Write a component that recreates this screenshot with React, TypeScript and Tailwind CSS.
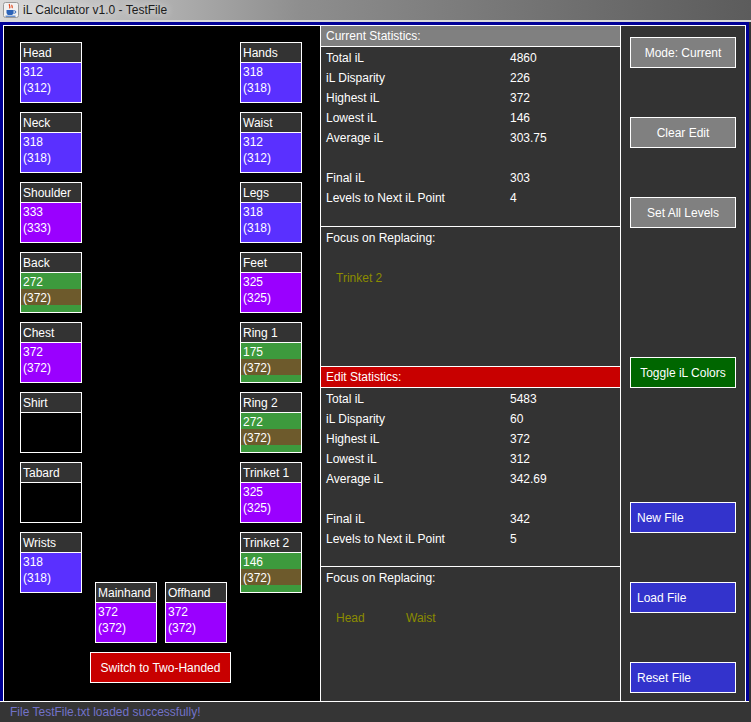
import React from 'react';

type Tone = 'blue' | 'purple' | 'low' | 'empty';

const bodyTone: Record<Tone, string> = {
  blue: 'bg-[#5a30ff]',
  purple: 'bg-[#9a00ff]',
  low: 'bg-[#3d9a3d]',
  empty: 'bg-black',
};

function Slot({ name, value, base, tone }: { name: string; value?: string; base?: string; tone: Tone }) {
  return (
    <div className="w-[62px] h-[61px] border border-white flex flex-col shrink-0">
      <div className="h-[20px] bg-[#333333] border-b border-white pl-[2px] pt-[1px] leading-[19px] text-white">{name}</div>
      <div className={`flex-1 ${bodyTone[tone]} text-white`}>
        {value && <div className="h-[16px] leading-[18px] pl-[2px]">{value}</div>}
        {base && (
          <div className={`h-[16px] leading-[18px] pl-[2px] ${tone === 'low' ? 'bg-[#6d5a2c]' : ''}`}>({base})</div>
        )}
      </div>
    </div>
  );
}

const leftSlots: { name: string; value?: string; base?: string; tone: Tone }[] = [
  { name: 'Head', value: '312', base: '312', tone: 'blue' },
  { name: 'Neck', value: '318', base: '318', tone: 'blue' },
  { name: 'Shoulder', value: '333', base: '333', tone: 'purple' },
  { name: 'Back', value: '272', base: '372', tone: 'low' },
  { name: 'Chest', value: '372', base: '372', tone: 'purple' },
  { name: 'Shirt', tone: 'empty' },
  { name: 'Tabard', tone: 'empty' },
  { name: 'Wrists', value: '318', base: '318', tone: 'blue' },
];

const rightSlots: { name: string; value?: string; base?: string; tone: Tone }[] = [
  { name: 'Hands', value: '318', base: '318', tone: 'blue' },
  { name: 'Waist', value: '312', base: '312', tone: 'blue' },
  { name: 'Legs', value: '318', base: '318', tone: 'blue' },
  { name: 'Feet', value: '325', base: '325', tone: 'purple' },
  { name: 'Ring 1', value: '175', base: '372', tone: 'low' },
  { name: 'Ring 2', value: '272', base: '372', tone: 'low' },
  { name: 'Trinket 1', value: '325', base: '325', tone: 'purple' },
  { name: 'Trinket 2', value: '146', base: '372', tone: 'low' },
];

function StatRows({ s }: { s: string[] }) {
  const labels = ['Total iL', 'iL Disparity', 'Highest iL', 'Lowest iL', 'Average iL', '', 'Final iL', 'Levels to Next iL Point'];
  return (
    <div>
      {labels.map((l, i) => (
        <div key={i} className="h-[20px] leading-[22px] flex pl-[5px] text-white">
          <span className="w-[184px]">{l}</span>
          <span>{s[i]}</span>
        </div>
      ))}
    </div>
  );
}

function Focus({ items }: { items: string[] }) {
  return (
    <div className="pl-[5px] text-white">
      <div className="h-[20px] leading-[22px]">Focus on Replacing:</div>
      <div className="mt-[20px] h-[20px] leading-[22px] flex pl-[10px] text-[#8c8c00]">
        {items.map((it) => (
          <span key={it} className="w-[70px]">{it}</span>
        ))}
      </div>
    </div>
  );
}

function SideButton({ label, tone, className = '' }: { label: string; tone: 'gray' | 'green' | 'blue'; className?: string }) {
  const styles = {
    gray: 'bg-[#808080] justify-center',
    green: 'bg-[#006600] justify-center',
    blue: 'bg-[#3333cc] justify-start pl-[6px]',
  }[tone];
  return (
    <div className={`w-[106px] h-[31px] ml-[9px] border border-white flex items-center text-white ${styles} ${className}`}>
      {label}
    </div>
  );
}

function JavaIcon() {
  return (
    <svg width="16" height="16" viewBox="0 0 16 16">
      <rect x="0.5" y="0.5" width="15" height="15" rx="2" fill="#f2f2f2" stroke="#9a9a9a" />
      <path d="M6.5 2c-1 1.4 1.4 2.4 0 4.4M9 2.8c-.8 1.2 1 2 0 3.4" stroke="#e2471c" fill="none" strokeWidth="1.2" />
      <path d="M3.5 8h7v2.5c0 1.6-1.2 2.6-2.7 2.6H6.2c-1.5 0-2.7-1-2.7-2.6z" fill="#2b63b8" />
      <path d="M10.5 8.8h1.1a1.2 1.2 0 0 1 0 2.4h-1.2" stroke="#2b63b8" fill="none" />
      <path d="M2.5 14.2h10" stroke="#2b63b8" />
    </svg>
  );
}

export default function App() {
  return (
    <div className="w-[751px] h-[722px] bg-[#333333] text-[12px] overflow-hidden font-['Liberation_Sans',Arial,sans-serif]">
      {/* title bar */}
      <div className="h-[20px] flex items-center pl-[3px] gap-[4px] bg-linear-to-r from-[#dadada] via-[#8e8e8e] via-40% to-[#5c5c5c]">
        <JavaIcon />
        <span className="text-[12px] text-[#1c1c1c] [text-shadow:0_0_8px_rgba(255,255,255,0.95)]">iL Calculator v1.0 - TestFile</span>
      </div>
      <div className="h-[2px] bg-[#d8d8d8]" />

      {/* frame */}
      <div className="w-[749px] border-b border-white">
        <div className="border-x-[3px] border-t-[3px] border-[#000096]">
          <div className="border-x border-t border-white h-[676px] flex">
            {/* equipment panel */}
            <div className="w-[316px] bg-black flex pl-[16px] pt-[16px]">
              <div className="flex flex-col gap-[9px]">
                {leftSlots.map((s) => (
                  <Slot key={s.name} {...s} />
                ))}
              </div>
              <div className="ml-[8px] w-[141px] flex flex-col">
                <div className="mt-[540px] pl-[5px] flex gap-[8px]">
                  <Slot name="Mainhand" value="372" base="372" tone="purple" />
                  <Slot name="Offhand" value="372" base="372" tone="purple" />
                </div>
                <div className="mt-[9px] h-[31px] w-[141px] bg-[#c80000] border border-white flex items-center justify-center text-white">
                  Switch to Two-Handed
                </div>
              </div>
              <div className="ml-[9px] flex flex-col gap-[9px]">
                {rightSlots.map((s) => (
                  <Slot key={s.name} {...s} />
                ))}
              </div>
            </div>

            {/* statistics */}
            <div className="w-[301px] border-x border-white bg-[#333333] flex flex-col">
              <div className="h-[201px] border-b border-white">
                <div className="h-[21px] bg-[#808080] border-b border-white pl-[5px] leading-[21px] text-white">Current Statistics:</div>
                <StatRows s={['4860', '226', '372', '146', '303.75', '', '303', '4']} />
              </div>
              <div className="h-[140px] border-b border-white">
                <Focus items={['Trinket 2']} />
              </div>
              <div className="h-[200px] border-b border-white">
                <div className="h-[21px] bg-[#c80000] border-b border-white pl-[5px] leading-[21px] text-white">Edit Statistics:</div>
                <StatRows s={['5483', '60', '372', '312', '342.69', '', '342', '5']} />
              </div>
              <div className="flex-1">
                <Focus items={['Head', 'Waist']} />
              </div>
            </div>

            {/* actions */}
            <div className="w-[124px] flex flex-col pt-[11px]">
              <SideButton label="Mode: Current" tone="gray" />
              <SideButton label="Clear Edit" tone="gray" className="mt-[49px]" />
              <SideButton label="Set All Levels" tone="gray" className="mt-[49px]" />
              <SideButton label="Toggle iL Colors" tone="green" className="mt-[129px]" />
              <SideButton label="New File" tone="blue" className="mt-[114px]" />
              <SideButton label="Load File" tone="blue" className="mt-[49px]" />
              <SideButton label="Reset File" tone="blue" className="mt-[49px]" />
            </div>
          </div>
        </div>
      </div>

      {/* status */}
      <div className="h-[20px] leading-[20px] pl-[10px] bg-[#353535] text-[#7272c8]">File TestFile.txt loaded successfully!</div>
    </div>
  );
}
